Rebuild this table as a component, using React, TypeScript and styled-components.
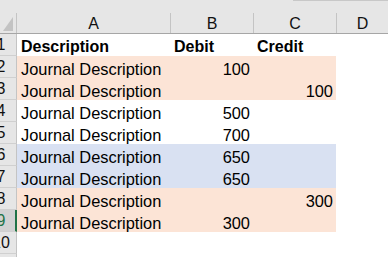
import styled, { createGlobalStyle } from "styled-components";

const GlobalStyle = createGlobalStyle`
  html, body {
    margin: 0;
    padding: 0;
    background: #ffffff;
  }
  body {
    font-family: "Liberation Sans", Arial, sans-serif;
    overflow: hidden;
  }
`;

const COLUMNS = "17px 153px 83px 83px 1fr";

const Sheet = styled.div`
  width: 388px;
  height: 257px;
  overflow: hidden;
  background: #ffffff;
`;

const HeaderTop = styled.div`
  height: 13px;
  background: #e6e6e6;
  display: flex;
  justify-content: flex-end;
`;

const TopEdge = styled.div`
  width: 95px;
  border-top: 1px solid #c8c8c8;
`;

const HeaderRow = styled.div`
  display: grid;
  grid-template-columns: ${COLUMNS};
  height: 20px;
  background: #e6e6e6;
  border-bottom: 1px solid #a6a6a6;
`;

const Corner = styled.div`
  border-right: 1px solid #c4c4c4;
  display: flex;
  align-items: flex-end;
  justify-content: flex-end;
  padding: 0 3px 2px 0;
`;

const CornerTriangle = styled.div`
  width: 0;
  height: 0;
  border-style: solid;
  border-width: 0 0 14px 10px;
  border-color: transparent transparent #c3c3c3 transparent;
`;

const ColumnLetter = styled.div<{ $divider?: boolean }>`
  box-sizing: border-box;
  border-left: ${(p) => (p.$divider ? "1px solid #c4c4c4" : "none")};
  text-align: center;
  font-size: 16px;
  line-height: 19px;
  padding-top: 1px;
  color: #111111;
`;

const Row = styled.div`
  display: grid;
  grid-template-columns: ${COLUMNS};
  height: 22px;
`;

const RowHeader = styled.div<{ $selected?: boolean }>`
  box-sizing: border-box;
  overflow: hidden;
  background: ${(p) => (p.$selected ? "#d2d2d2" : "#e6e6e6")};
  border-right: ${(p) =>
    p.$selected ? "2px solid #217346" : "1px solid #c4c4c4"};
  border-bottom: 1px solid #d0d0d0;
  color: ${(p) => (p.$selected ? "#217346" : "#111111")};
  font-size: 16px;
  line-height: 21px;
`;

const RowNumber = styled.span`
  display: block;
  width: 34px;
  margin-left: -16px;
  text-align: center;
`;

const Cell = styled.div<{ $fill?: string; $align?: "left" | "right"; $bold?: boolean }>`
  box-sizing: border-box;
  background: ${(p) => p.$fill ?? "transparent"};
  display: flex;
  align-items: flex-end;
  justify-content: ${(p) => (p.$align === "right" ? "flex-end" : "flex-start")};
  padding: 0 3px 0.5px 4px;
  font-size: ${(p) => (p.$bold ? "16px" : "16.4px")};
  line-height: 18px;
  font-weight: ${(p) => (p.$bold ? 700 : 400)};
  color: #000000;
  white-space: nowrap;
`;

const PINK = "#fce4d6";
const BLUE = "#d9e1f2";

type Entry = { debit?: number; credit?: number; fill?: string };

const entries: Entry[] = [
  { debit: 100, fill: PINK },
  { credit: 100, fill: PINK },
  { debit: 500 },
  { debit: 700 },
  { debit: 650, fill: BLUE },
  { debit: 650, fill: BLUE },
  { credit: 300, fill: PINK },
  { debit: 300, fill: PINK },
];

export default function App() {
  return (
    <Sheet>
      <GlobalStyle />
      <HeaderTop>
        <TopEdge />
      </HeaderTop>
      <HeaderRow>
        <Corner>
          <CornerTriangle />
        </Corner>
        <ColumnLetter>A</ColumnLetter>
        <ColumnLetter $divider>B</ColumnLetter>
        <ColumnLetter $divider>C</ColumnLetter>
        <ColumnLetter $divider>D</ColumnLetter>
      </HeaderRow>

      <Row>
        <RowHeader>
          <RowNumber>1</RowNumber>
        </RowHeader>
        <Cell $bold>Description</Cell>
        <Cell $bold>Debit</Cell>
        <Cell $bold>Credit</Cell>
        <Cell />
      </Row>

      {entries.map((e, i) => (
        <Row key={i}>
          <RowHeader $selected={i + 2 === 9}>
            <RowNumber>{i + 2}</RowNumber>
          </RowHeader>
          <Cell $fill={e.fill}>Journal Description</Cell>
          <Cell $fill={e.fill} $align="right">
            {e.debit}
          </Cell>
          <Cell $fill={e.fill} $align="right">
            {e.credit}
          </Cell>
          <Cell />
        </Row>
      ))}

      <Row>
        <RowHeader>
          <RowNumber>10</RowNumber>
        </RowHeader>
        <Cell />
        <Cell />
        <Cell />
        <Cell />
      </Row>
      <Row>
        <RowHeader>
          <RowNumber>11</RowNumber>
        </RowHeader>
        <Cell />
        <Cell />
        <Cell />
        <Cell />
      </Row>
    </Sheet>
  );
}
